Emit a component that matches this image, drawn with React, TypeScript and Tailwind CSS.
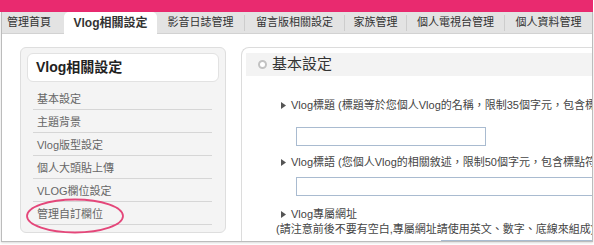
import React from 'react';

const tabs = [
  { label: '管理首頁', w: 'w-[62px] justify-start pl-[5px]' },
  { label: 'Vlog相關設定', w: 'w-[93px] justify-center', active: true },
  { label: '影音日誌管理', w: 'w-[87px] justify-center' },
  { label: '留言版相關設定', w: 'w-[99px] justify-center', sep: true },
  { label: '家族管理', w: 'w-[61px] justify-center', sep: true },
  { label: '個人電視台管理', w: 'w-[97px] justify-center', sep: true },
  { label: '個人資料管理', w: 'w-[87px] justify-center', sep: true },
];

const menu = ['基本設定', '主題背景', 'Vlog版型設定', '個人大頭貼上傳', 'VLOG欄位設定', '管理自訂欄位'];

function Arrow() {
  return (
    <svg width="5" height="7" viewBox="0 0 5 7" className="shrink-0">
      <polygon points="0,0 5,3.5 0,7" fill="#555555" />
    </svg>
  );
}

export default function App() {
  return (
    <div className="relative w-[594px] h-[245px] overflow-hidden bg-white font-['Liberation_Sans','Noto_Sans_CJK_TC',sans-serif]">
      <div className="h-[12px] w-[593px] bg-[#e92a6f]" />
      <div className="ml-[1px] w-[592px] border-l border-r border-b border-[#bcbcbc] shadow-[0_1px_2px_rgba(0,0,0,0.15)]">
        {/* tab bar */}
        <div className="flex h-[22px] bg-[#e3e3e3] border-b border-[#d2d2d2]">
          {tabs.map((t) => (
            <React.Fragment key={t.label}>
              {t.sep && <div className="w-px h-[16px] self-center bg-[#cdcdcd]" />}
              <div
                className={`flex items-center ${t.w} ${
                  t.active
                    ? 'h-[22px] bg-white rounded-t-[5px] text-[12px] font-bold text-[#333] relative z-10'
                    : 'text-[11px] text-[#333]'
                }`}
              >
                {t.label}
              </div>
            </React.Fragment>
          ))}
        </div>

        {/* body */}
        <div className="flex h-[207px] overflow-hidden pt-[13px]">
          {/* sidebar */}
          <div className="ml-[18px] w-[206px] h-[186px] shrink-0 rounded-[6px] border border-[#dedede] bg-[#f4f4f4] px-[6px] pt-[5px]">
            <div className="h-[29px] rounded-[6px] border border-[#e2e2e2] bg-white flex items-center pl-[8px] text-[14px] font-bold text-[#222]">
              Vlog相關設定
            </div>
            <div className="mt-[5px] ml-[6px] mr-[7px]">
              {menu.map((m) => (
                <div
                  key={m}
                  className="h-[23px] pt-[3px] pl-[4px] flex items-center border-b border-[#d6d6d6] text-[11px] text-[#666]"
                >
                  {m}
                </div>
              ))}
            </div>
          </div>

          {/* main panel */}
          <div className="ml-[15px] w-[420px] shrink-0 rounded-tl-[8px] border-l border-t border-[#dcdcdc] pt-[5px] pl-[4px]">
            <div className="h-[23px] bg-[#f3f3f3] flex items-center">
              <div className="ml-[12px] w-[9px] h-[9px] rounded-full border-2 border-[#c2c2c2] bg-white" />
              <span className="ml-[5px] text-[15px] text-[#333]">基本設定</span>
            </div>
            <div className="pl-[35px] text-[11px] text-[#444]">
              <div className="mt-[22px] h-[14px] flex items-center whitespace-nowrap">
                <Arrow />
                <span className="ml-[5px]">Vlog標題 (標題等於您個人Vlog的名稱，限制35個字元，包含標點符號)</span>
              </div>
              <div className="mt-[15px] ml-[15px] w-[190px] h-[19px] border border-[#a9bbd0] bg-white" />
              <div className="mt-[9px] h-[14px] flex items-center whitespace-nowrap">
                <Arrow />
                <span className="ml-[5px]">Vlog標語 (您個人Vlog的相關敘述，限制50個字元，包含標點符號)</span>
              </div>
              <div className="mt-[8px] ml-[15px] w-[400px] h-[19px] border border-[#a9bbd0] bg-white" />
              <div className="mt-[11px] h-[15px] flex items-center whitespace-nowrap">
                <Arrow />
                <span className="ml-[5px]">Vlog專屬網址</span>
              </div>
              <div className="-ml-[5px] h-[15px] flex items-center whitespace-nowrap">
                (請注意前後不要有空白,專屬網址請使用英文、數字、底線來組成)
              </div>
              <div className="mt-[3px] ml-[160px] w-[300px] h-[19px] border border-[#a9bbd0] bg-white" />
            </div>
          </div>
        </div>
      </div>

      {/* annotation ellipse */}
      <svg className="absolute left-0 top-0 pointer-events-none" width="594" height="245">
        <ellipse cx="75" cy="216" rx="48" ry="16.5" fill="none" stroke="#e4477a" strokeWidth="1.8" />
      </svg>
    </div>
  );
}
